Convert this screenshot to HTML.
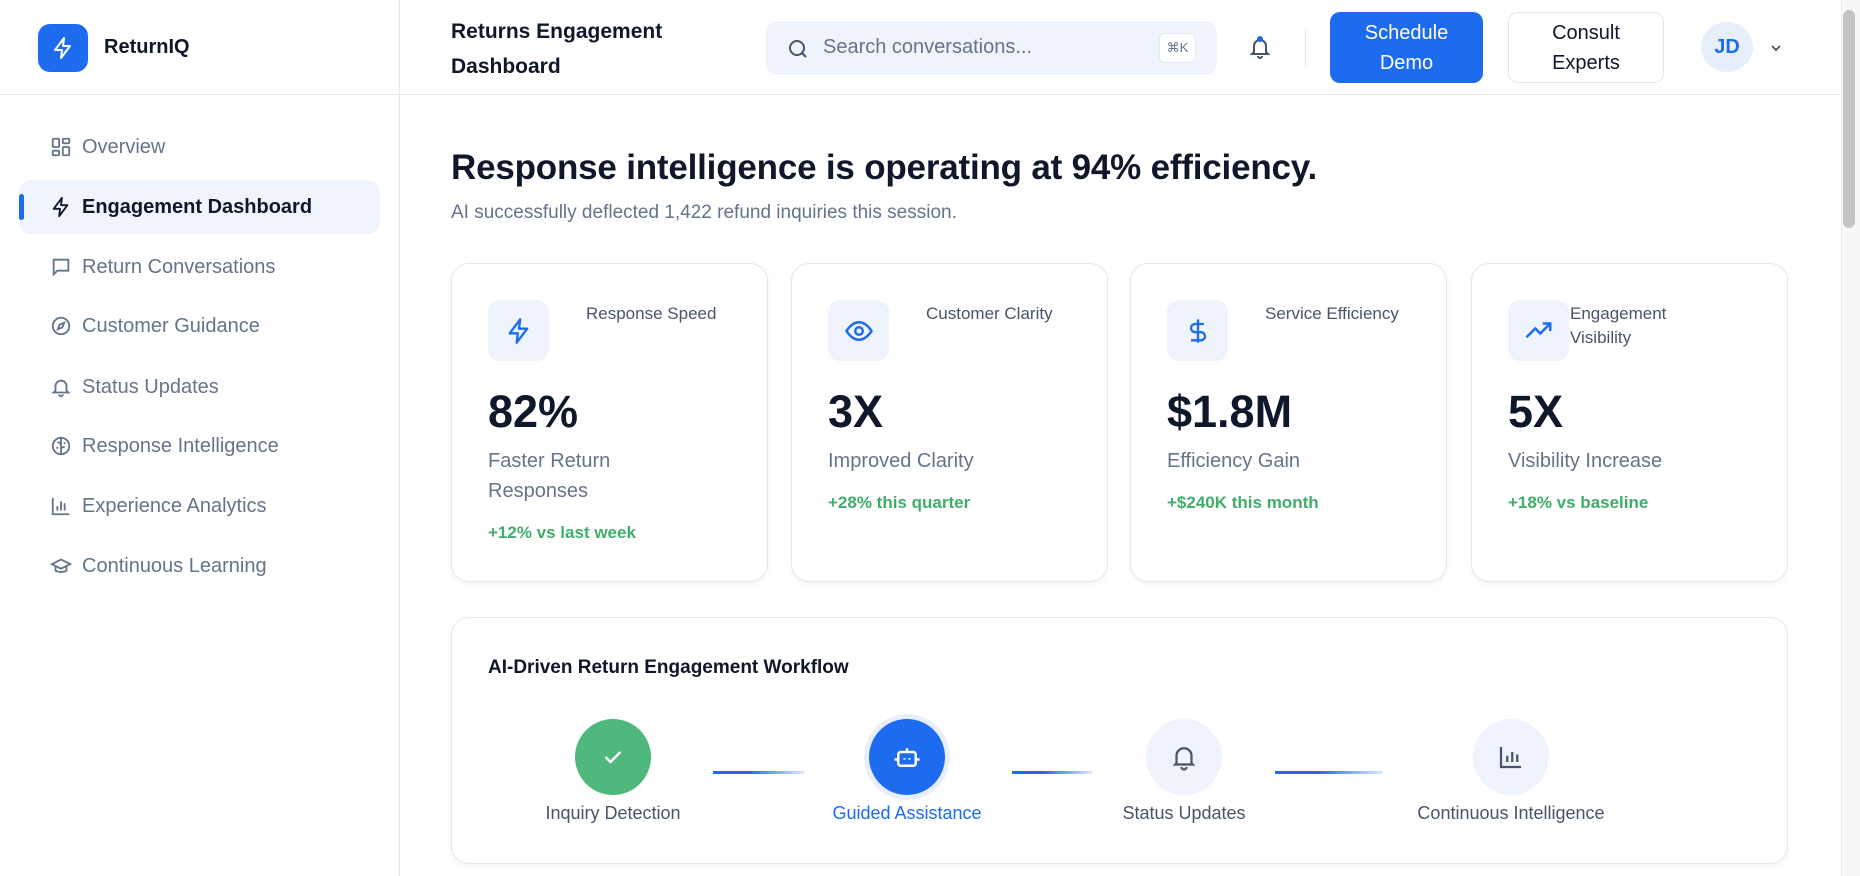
<!DOCTYPE html>
<html><head><meta charset="utf-8"><style>
*{box-sizing:border-box;margin:0;padding:0}
body{width:1860px;height:876px;overflow:hidden;background:#fff;font-family:"Liberation Sans",sans-serif;color:#0f172a;position:relative}
.abs{position:absolute}
.side{left:0;top:0;width:400px;height:876px;border-right:1px solid #e5e7eb;background:#fff}
.hdr{left:400px;top:0;width:1441px;height:95px;border-bottom:1px solid #e5e7eb}
.sideh{left:0;top:94px;width:400px;border-top:1px solid #e5e7eb}
.nav{position:absolute;left:19px;width:361px;height:54px;display:flex;align-items:center;font-size:20px;color:#64748b}
.nav svg{position:absolute;left:31px;top:50%;margin-top:-11px}
.nav span{position:absolute;left:63px}
.nav.act{background:#eff4fd;border-radius:12px;color:#0f172a;font-weight:bold}
.card{position:absolute;top:263px;width:317px;height:319px;border:1px solid #e2e8f0;border-radius:18px;background:#fff;box-shadow:0 2px 6px rgba(15,23,42,.05)}
.ib{position:absolute;left:36px;top:36px;width:61px;height:61px;border-radius:12px;background:#eef3fc;display:flex;align-items:center;justify-content:center}
.lab{position:absolute;left:134px;top:38px;font-size:17px;color:#475569;line-height:24px}
.big{position:absolute;left:36px;top:122px;font-size:45px;font-weight:bold;color:#0f172a}
.desc{position:absolute;left:36px;top:182px;font-size:20px;color:#64748b;line-height:30px}
.grn{position:absolute;left:36px;font-size:17px;color:#3fae6a;font-weight:bold}
.circ{position:absolute;top:719px;width:76px;height:76px;border-radius:50%;display:flex;align-items:center;justify-content:center}
.cl{position:absolute;top:803px;font-size:18px;color:#475569;transform:translateX(-50%);white-space:nowrap}
.ln{position:absolute;top:771px;height:3px;background:linear-gradient(90deg,#1d6cf0,#1d6cf0 40%,rgba(29,108,240,.15))}
</style></head><body>
<div class="abs side"></div>
<div class="abs hdr"></div>
<div class="abs sideh"></div>
<div class="abs" style="left:38px;top:24px;width:50px;height:48px;border-radius:12px;background:#1d6cf0;display:flex;align-items:center;justify-content:center">
<svg width="24" height="24" viewBox="0 0 24 24" fill="none" stroke="#fff" stroke-width="2" stroke-linejoin="round"><path d="M13 2 4 14h7l-1 8 9-12h-7z"/></svg></div>
<div class="abs" style="left:104px;top:36px;font-size:20px;font-weight:bold">ReturnIQ</div>

<div class="nav" style="top:120px"><svg width="22" height="22" viewBox="0 0 24 24" fill="none" stroke="#64748b" stroke-width="2"><rect x="3" y="3" width="7" height="9" rx="1"/><rect x="14" y="3" width="7" height="5" rx="1"/><rect x="14" y="12" width="7" height="9" rx="1"/><rect x="3" y="16" width="7" height="5" rx="1"/></svg><span>Overview</span></div>
<div class="nav act" style="top:180px"><div class="abs" style="left:0;top:14px;width:5px;height:26px;background:#1d6cf0;border-radius:3px"></div><svg width="22" height="22" viewBox="0 0 24 24" fill="none" stroke="#0f172a" stroke-width="2" stroke-linejoin="round"><path d="M13 2 4 14h7l-1 8 9-12h-7z"/></svg><span>Engagement Dashboard</span></div>
<div class="nav" style="top:240px"><svg width="22" height="22" viewBox="0 0 24 24" fill="none" stroke="#64748b" stroke-width="2"><path d="M4 4h16v12H8l-4 4z"/></svg><span>Return Conversations</span></div>
<div class="nav" style="top:299px"><svg width="22" height="22" viewBox="0 0 24 24" fill="none" stroke="#64748b" stroke-width="2"><circle cx="12" cy="12" r="9"/><path d="m15.5 8.5-2 5-5 2 2-5z"/></svg><span>Customer Guidance</span></div>
<div class="nav" style="top:360px"><svg width="22" height="22" viewBox="0 0 24 24" fill="none" stroke="#64748b" stroke-width="2"><path d="M6 16V11a6 6 0 0 1 12 0v5l2 2H4zM10 20a2 2 0 0 0 4 0"/></svg><span>Status Updates</span></div>
<div class="nav" style="top:419px"><svg width="22" height="22" viewBox="0 0 24 24" fill="none" stroke="#64748b" stroke-width="2"><circle cx="12" cy="12" r="9"/><path d="M12 3v18M8 8c2 0 4 1 4 3M16 13c-2 0-4 1-4 3M7 14h2M15 9h2"/></svg><span>Response Intelligence</span></div>
<div class="nav" style="top:479px"><svg width="22" height="22" viewBox="0 0 24 24" fill="none" stroke="#64748b" stroke-width="2"><path d="M3 3v18h18M8 17v-5M12 17V7M16 17v-8"/></svg><span>Experience Analytics</span></div>
<div class="nav" style="top:539px"><svg width="22" height="22" viewBox="0 0 24 24" fill="none" stroke="#64748b" stroke-width="2"><path d="m2 10 10-5 10 5-10 5zM6 12v5c3 2 9 2 12 0v-5"/></svg><span>Continuous Learning</span></div>

<div class="abs" style="left:451px;top:14px;font-size:21px;font-weight:bold;line-height:35px">Returns Engagement<br>Dashboard</div>
<div class="abs" style="left:766px;top:21px;width:451px;height:54px;border-radius:12px;background:#eef3fc">
<svg class="abs" style="left:20px;top:16px" width="24" height="24" viewBox="0 0 24 24" fill="none" stroke="#475569" stroke-width="2"><circle cx="11" cy="11" r="7"/><path d="m16 16 4 4"/></svg>
<div class="abs" style="left:57px;top:15px;font-size:20px;color:#64748b">Search conversations...</div>
<div class="abs" style="left:393px;top:12px;width:37px;height:30px;background:#fff;border:1px solid #e2e8f0;border-radius:6px;font-size:13px;color:#64748b;text-align:center;line-height:28px">⌘K</div></div>
<svg class="abs" style="left:1248px;top:34px" width="24" height="26" viewBox="0 0 24 26" fill="none" stroke="#475569" stroke-width="2"><path d="M6 18v-6a6 6 0 0 1 12 0v6l2 2H4zM10 22a2 2 0 0 0 4 0"/><circle cx="12" cy="5" r="3" fill="#1d6cf0" stroke="none"/></svg>
<div class="abs" style="left:1305px;top:30px;width:1px;height:36px;background:#e2e8f0"></div>
<div class="abs" style="left:1330px;top:12px;width:153px;height:71px;border-radius:10px;background:#1d6cf0;color:#fff;font-size:20px;text-align:center;line-height:30px;padding-top:6px">Schedule<br>Demo</div>
<div class="abs" style="left:1508px;top:12px;width:156px;height:71px;border-radius:10px;border:1px solid #e2e8f0;color:#0f172a;font-size:20px;text-align:center;line-height:30px;padding-top:5px">Consult<br>Experts</div>
<div class="abs" style="left:1701px;top:22px;width:52px;height:50px;border-radius:50%;background:#e8effc;color:#1d6cf0;font-weight:bold;font-size:20px;text-align:center;line-height:50px">JD</div>
<svg class="abs" style="left:1768px;top:40px" width="16" height="16" viewBox="0 0 16 16" fill="none" stroke="#475569" stroke-width="1.8"><path d="m4 6 4 4 4-4"/></svg>
<div class="abs" style="left:1841px;top:0;width:19px;height:876px;background:#f8f8f8;border-left:1px solid #ececec"></div>
<div class="abs" style="left:1843px;top:10px;width:12px;height:218px;background:#c4c4c4;border-radius:6px"></div>

<div class="abs" style="left:451px;top:148px;font-size:35px;font-weight:bold;letter-spacing:-0.2px">Response intelligence is operating at 94% efficiency.</div>
<div class="abs" style="left:451px;top:202px;font-size:19px;color:#64748b">AI successfully deflected 1,422 refund inquiries this session.</div>

<div class="card" style="left:451px"><div class="ib"><svg width="28" height="28" viewBox="0 0 24 24" fill="none" stroke="#1d6cf0" stroke-width="2" stroke-linejoin="round"><path d="M13 2 4 14h7l-1 8 9-12h-7z"/></svg></div><div class="lab">Response Speed</div><div class="big">82%</div><div class="desc">Faster Return<br>Responses</div><div class="grn" style="top:259px">+12% vs last week</div></div>
<div class="card" style="left:791px"><div class="ib"><svg width="30" height="30" viewBox="0 0 24 24" fill="none" stroke="#1d6cf0" stroke-width="2"><path d="M2 12s4-7 10-7 10 7 10 7-4 7-10 7S2 12 2 12z"/><circle cx="12" cy="12" r="3"/></svg></div><div class="lab">Customer Clarity</div><div class="big">3X</div><div class="desc">Improved Clarity</div><div class="grn" style="top:229px">+28% this quarter</div></div>
<div class="card" style="left:1130px"><div class="ib"><svg width="28" height="28" viewBox="0 0 24 24" fill="none" stroke="#1d6cf0" stroke-width="2"><path d="M12 2v20M17 6H9.5a3.5 3.5 0 0 0 0 7h5a3.5 3.5 0 0 1 0 7H6"/></svg></div><div class="lab">Service Efficiency</div><div class="big">$1.8M</div><div class="desc">Efficiency Gain</div><div class="grn" style="top:229px">+$240K this month</div></div>
<div class="card" style="left:1471px"><div class="ib"><svg width="30" height="30" viewBox="0 0 24 24" fill="none" stroke="#1d6cf0" stroke-width="2"><path d="m2 17 7-7 4 4 8-8M15 6h6v6"/></svg></div><div class="lab" style="left:98px">Engagement<br>Visibility</div><div class="big">5X</div><div class="desc">Visibility Increase</div><div class="grn" style="top:229px">+18% vs baseline</div></div>

<div class="abs" style="left:451px;top:617px;width:1337px;height:247px;border:1px solid #e2e8f0;border-radius:18px;box-shadow:0 2px 6px rgba(15,23,42,.05)"></div>
<div class="abs" style="left:488px;top:657px;font-size:19px;font-weight:bold">AI-Driven Return Engagement Workflow</div>
<div class="ln" style="left:713px;width:91px"></div>
<div class="ln" style="left:1012px;width:80px"></div>
<div class="ln" style="left:1275px;width:108px"></div>
<div class="circ" style="left:575px;background:#4fb87c"><svg width="30" height="30" viewBox="0 0 24 24" fill="none" stroke="#fff" stroke-width="2"><path d="m6 12 4 4 8-8"/></svg></div>
<div class="circ" style="left:869px;background:#1d6cf0;box-shadow:0 0 0 5px #e8effc"><svg width="30" height="30" viewBox="0 0 24 24" fill="none" stroke="#fff" stroke-width="2"><rect x="5" y="8" width="14" height="11" rx="2"/><path d="M12 8V5M3 13v2M21 13v2M10 13v1M14 13v1"/></svg></div>
<div class="circ" style="left:1146px;background:#eef3fc"><svg width="30" height="30" viewBox="0 0 24 24" fill="none" stroke="#475569" stroke-width="1.8"><path d="M6 17v-6a6 6 0 0 1 12 0v6l1 1H5zM10 20a2 2 0 0 0 4 0"/></svg></div>
<div class="circ" style="left:1473px;background:#eef3fc"><svg width="30" height="30" viewBox="0 0 24 24" fill="none" stroke="#475569" stroke-width="1.8"><path d="M4 4v16h16M9 16v-5M13 16V8M17 16v-6"/></svg></div>
<div class="cl" style="left:613px">Inquiry Detection</div>
<div class="cl" style="left:907px;color:#1d6cf0">Guided Assistance</div>
<div class="cl" style="left:1184px">Status Updates</div>
<div class="cl" style="left:1511px">Continuous Intelligence</div>
</body></html>
